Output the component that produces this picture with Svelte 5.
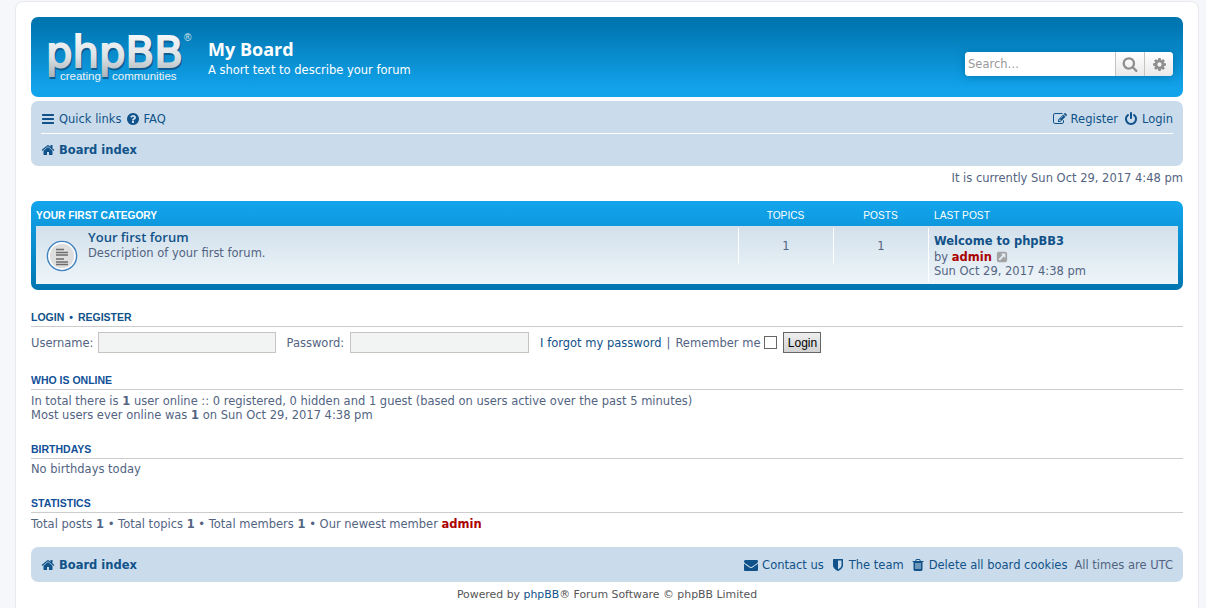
<script>
	const icons = {
		bars: "M1664 1344v128q0 26-19 45t-45 19h-1408q-26 0-45-19t-19-45v-128q0-26 19-45t45-19h1408q26 0 45 19t19 45zm0-512v128q0 26-19 45t-45 19h-1408q-26 0-45-19t-19-45v-128q0-26 19-45t45-19h1408q26 0 45 19t19 45zm0-512v128q0 26-19 45t-45 19h-1408q-26 0-45-19t-19-45v-128q0-26 19-45t45-19h1408q26 0 45 19t19 45z",
		question: "M1024 1376v-192q0-14-9-23t-23-9h-192q-14 0-23 9t-9 23v192q0 14 9 23t23 9h192q14 0 23-9t9-23zm256-672q0-88-55.5-163t-138.5-116-170-41q-243 0-371 213-15 24 8 42l132 100q7 6 19 6 16 0 25-12 53-68 86-92 34-24 86-24 48 0 85.5 26t37.5 59q0 38-20 61t-68 45q-63 28-115.5 86.5t-52.5 125.5v36q0 14 9 23t23 9h192q14 0 23-9t9-23q0-19 21.5-49.5t54.5-49.5q32-18 49-28.5t46-35 44.5-48 28-60.5 12.5-81zm384 192q0 209-103 385.5t-279.5 279.5-385.5 103-385.5-103-279.5-279.5-103-385.5 103-385.5 279.5-279.5 385.5-103 385.5 103 279.5 279.5 103 385.5z",
		home: "M1472 992v480q0 26-19 45t-45 19h-384v-384h-256v384h-384q-26 0-45-19t-19-45v-480q0-1 .5-3t.5-3l575-474 575 474q1 2 1 6zm223-69l-62 74q-8 9-21 11h-3q-13 0-21-7l-692-577-692 577q-12 8-24 7-13-2-21-11l-62-74q-8-10-7-23.5t11-21.5l719-599q32-26 76-26t76 26l244 204v-195q0-14 9-23t23-9h192q14 0 23 9t9 23v408l219 182q10 8 11 21.5t-7 23.5z",
		pencil: "M888 1184l116-116-152-152-116 116v56h96v96h56zm440-720q-16-16-33 1l-350 350q-17 17-1 33t33-1l350-350q17-17 1-33zm80 594v190q0 119-84.5 203.5t-203.5 84.5h-832q-119 0-203.5-84.5t-84.5-203.5v-832q0-119 84.5-203.5t203.5-84.5h832q63 0 117 25 15 7 18 23 3 17-9 29l-49 49q-14 14-32 8-23-6-45-6h-832q-66 0-113 47t-47 113v832q0 66 47 113t113 47h832q66 0 113-47t47-113v-126q0-13 9-22l64-64q15-15 35-7t20 29zm-96-738l288 288-672 672h-288v-288zm444 132l-92 92-288-288 92-92q28-28 68-28t68 28l152 152q28 28 28 68t-28 68z",
		power: "M1664 896q0 156-61 298t-164 245-245 164-298 61-298-61-245-164-164-245-61-298q0-182 80.5-343t226.5-270q43-32 95.5-25t83.5 50q32 42 24.5 94.5t-49.5 84.5q-98 74-151.5 181t-53.5 228q0 104 40.5 198.5t109.5 163.5 163.5 109.5 198.5 40.5 198.5-40.5 163.5-109.5 109.5-163.5 40.5-198.5q0-121-53.5-228t-151.5-181q-42-32-49.5-84.5t24.5-94.5q31-43 84-50t95 25q146 109 226.5 270t80.5 343zm-640-768v640q0 52-38 90t-90 38-90-38-38-90v-640q0-52 38-90t90-38 90 38 38 90z",
		search: "M1216 832q0-185-131.5-316.5t-316.5-131.5-316.5 131.5-131.5 316.5 131.5 316.5 316.5 131.5 316.5-131.5 131.5-316.5zm512 832q0 52-38 90t-90 38q-54 0-90-38l-343-342q-179 124-399 124-143 0-273.5-55.5t-225-150-150-225-55.5-273.5 55.5-273.5 150-225 225-150 273.5-55.5 273.5 55.5 225 150 150 225 55.5 273.5q0 220-124 399l343 343q37 37 37 90z",
		cog: "M1152 896q0-106-75-181t-181-75-181 75-75 181 75 181 181 75 181-75 75-181zm512-109v222q0 12-8 23t-20 13l-185 28q-19 54-39 91 35 50 107 138 10 12 10 25t-9 23q-27 37-99 108t-94 71q-12 0-26-9l-138-108q-44 23-91 38-16 136-29 186-7 28-36 28h-222q-14 0-24.5-8.5t-11.5-21.5l-28-184q-49-16-90-37l-141 107q-10 9-25 9-14 0-25-11-126-114-165-168-7-10-7-23 0-12 8-23 15-21 51-66.5t54-70.5q-27-50-41-99l-183-27q-13-2-21-12.5t-8-23.5v-222q0-12 8-23t19-13l186-28q14-46 39-92-40-57-107-138-10-12-10-24 0-10 9-23 26-36 98.5-107.5t94.5-71.5q13 0 26 10l138 107q44-23 91-38 16-136 29-186 7-28 36-28h222q14 0 24.5 8.5t11.5 21.5l28 184q49 16 90 37l142-107q9-9 24-9 13 0 25 10 129 119 165 170 7 8 7 22 0 12-8 23-15 21-51 66.5t-54 70.5q26 50 41 98l183 28q13 2 21 12.5t8 23.5z",
		envelope: "M1792 710v794q0 66-47 113t-113 47h-1472q-66 0-113-47t-47-113v-794q44 49 101 87 362 246 497 345 57 42 92.5 65.5t94.5 48 110 24.5h2q51 0 110-24.5t94.5-48 92.5-65.5q170-123 498-345 57-39 100-87zm0-294q0 79-49 151t-122 123q-376 261-468 325-10 7-42.5 30.5t-54 38-52 32.5-57.5 27-50 9h-2q-23 0-50-9t-57.5-27-52-32.5-54-38-42.5-30.5q-91-64-262-182.5t-205-142.5q-62-42-117-115.5t-55-136.5q0-78 41.5-130t118.5-52h1472q65 0 112.5 47t47.5 113z",
		shield: "M1344 960v-640h-448v1137q119-63 213-137 235-184 235-360zm192-768v768q0 86-33.5 170.5t-83 150-118 127.5-126.5 102.5-121 77.5-89.5 49.5-42.5 20q-12 6-26 6t-26-6q-16-7-42.5-20t-89.5-49.5-121-77.5-126.5-102.5-118-127.5-83-150-33.5-170.5v-768q0-26 19-45t45-19h1152q26 0 45 19t19 45z",
		trash: "M704 1376v-704q0-14-9-23t-23-9h-64q-14 0-23 9t-9 23v704q0 14 9 23t23 9h64q14 0 23-9t9-23zm256 0v-704q0-14-9-23t-23-9h-64q-14 0-23 9t-9 23v704q0 14 9 23t23 9h64q14 0 23-9t9-23zm256 0v-704q0-14-9-23t-23-9h-64q-14 0-23 9t-9 23v704q0 14 9 23t23 9h64q14 0 23-9t9-23zm-544-992h448l-48-117q-7-9-17-11h-317q-10 2-17 11zm928 32v64q0 14-9 23t-23 9h-96v948q0 83-47 143.5t-113 60.5h-832q-66 0-113-58.5t-47-141.5v-952h-96q-14 0-23-9t-9-23v-64q0-14 9-23t23-9h309l70-167q15-37 54-63t79-26h320q40 0 79 26t54 63l70 167h309q14 0 23 9t9 23z",
		external: "M1408 928v-480q0-26-19-45t-45-19h-480q-42 0-59 39-17 41 14 70l144 144-534 534q-19 19-19 45t19 45l102 102q19 19 45 19t45-19l534-534 144 144q18 19 45 19 12 0 25-5 39-17 39-59zm256-512v960q0 119-84.5 203.5t-203.5 84.5h-960q-119 0-203.5-84.5t-84.5-203.5v-960q0-119 84.5-203.5t203.5-84.5h960q119 0 203.5 84.5t84.5 203.5z"
	}
</script>

{#snippet icon(name, size = 14)}
	<svg class="icon" width={size} height={size} viewBox="0 0 1792 1792" aria-hidden="true"><path d={icons[name]} fill="currentColor"/></svg>
{/snippet}

<div class="wrap">
	<header class="headerbar">
		<svg class="logo" width="149" height="58" viewBox="0 0 149 58" role="img" aria-label="phpBB">
			<defs>
				<linearGradient id="silver" gradientUnits="userSpaceOnUse" x1="0" y1="3" x2="0" y2="48">
					<stop offset="0" stop-color="#f6f8f9"/>
					<stop offset="0.5" stop-color="#dde2e5"/>
					<stop offset="1" stop-color="#a4aeb4"/>
				</linearGradient>
			</defs>
			<text class="brand" x="1" y="36" textLength="137" lengthAdjust="spacingAndGlyphs" fill="#0b5d93" stroke="#0b5d93" stroke-width="2" transform="translate(1 1.5)">phpBB</text>
			<text class="brand" x="1" y="36" textLength="137" lengthAdjust="spacingAndGlyphs" fill="url(#silver)" stroke="url(#silver)" stroke-width="2">phpBB</text>
			<text class="tag" x="15" y="48.5">creating</text>
			<text class="tag" x="67" y="48.5">communities</text>
			<text class="reg" x="139" y="10">®</text>
		</svg>
		<div class="site">
			<h1>My Board</h1>
			<p>A short text to describe your forum</p>
		</div>
		<div class="searchbox">
			<input type="text" placeholder="Search…"/>
			<button type="button">{@render icon("search", 16)}</button>
			<button type="button">{@render icon("cog", 15)}</button>
		</div>
	</header>

	<nav class="navbar">
		<div class="navrow">
			<div class="links quick">
				<a href="#q">{@render icon("bars")}Quick links</a>
				<a href="#f">{@render icon("question")}FAQ</a>
			</div>
			<div class="links">
				<a href="#r">{@render icon("pencil")}Register</a>
				<a href="#l">{@render icon("power")}Login</a>
			</div>
		</div>
		<div class="crumbs"><a href="#i">{@render icon("home")}<b>Board index</b></a></div>
	</nav>

	<p class="time">It is currently Sun Oct 29, 2017 4:48 pm</p>

	<section class="forabg">
		<div class="cols head">
			<div class="main">Your first category</div>
			<div class="num">Topics</div>
			<div class="num">Posts</div>
			<div class="last">Last post</div>
		</div>
		<div class="cols row">
			<div class="main forum">
				<svg class="forumicon" width="32" height="32" viewBox="0 0 32 32" aria-hidden="true">
					<circle cx="16" cy="16" r="14.6" fill="#fff" stroke="#3f82bf" stroke-width="1.4"/>
					<circle cx="16" cy="16" r="12.2" fill="#dedede"/>
					<path d="M10 9.5h8M10 12.5h12M10 15h12M10 19h8M10 22h12M10 24.5h12" stroke="#6d6d6d" stroke-width="1.5" fill="none"/>
				</svg>
				<div>
					<a class="forumtitle" href="#t">Your first forum</a>
					<p>Description of your first forum.</p>
				</div>
			</div>
			<div class="num cell">1</div>
			<div class="num cell">1</div>
			<div class="last cell">
				<a class="lasttitle" href="#w">Welcome to phpBB3</a>
				<span class="line">by <a class="admin" href="#a">admin</a> <span class="ext">{@render icon("external", 12)}</span></span>
				<span class="line">Sun Oct 29, 2017 4:38 pm</span>
			</div>
		</div>
	</section>

	<section class="login">
		<h3><a href="#l">Login</a><span class="dot">•</span><a href="#r">Register</a></h3>
		<form class="loginform">
			<label for="u">Username:</label>
			<input id="u" class="field" type="text"/>
			<label class="pw" for="p">Password:</label>
			<input id="p" class="field second" type="password"/>
			<span class="remember"><a href="#p">I forgot my password</a><span class="sep">|</span>Remember me</span>
			<input class="check" type="checkbox"/>
			<button class="submit" type="button">Login</button>
		</form>
	</section>

	<section class="online">
		<h3>Who is online</h3>
		<p>In total there is <b>1</b> user online :: 0 registered, 0 hidden and 1 guest (based on users active over the past 5 minutes)<br/>Most users ever online was <b>1</b> on Sun Oct 29, 2017 4:38 pm</p>
	</section>

	<section class="birthdays">
		<h3>Birthdays</h3>
		<p>No birthdays today</p>
	</section>

	<section class="stats">
		<h3>Statistics</h3>
		<p>Total posts <b>1</b> • Total topics <b>1</b> • Total members <b>1</b> • Our newest member <a class="admin" href="#a">admin</a></p>
	</section>

	<nav class="navbar footbar">
		<a href="#i">{@render icon("home")}<b>Board index</b></a>
		<div class="links foot">
			<a href="#c">{@render icon("envelope")}Contact us</a>
			<a href="#t">{@render icon("shield")}The team</a>
			<a href="#d">{@render icon("trash")}Delete all board cookies</a>
			<span>All times are UTC</span>
		</div>
	</nav>

	<p class="copy">Powered by <a href="#b">phpBB</a>® Forum Software © phpBB Limited</p>
</div>

<style>
	:global(html), :global(body) {
		height: 608px;
		overflow: hidden;
	}
	:global(body) {
		margin: 0;
		padding-top: 1px;
		box-sizing: border-box;
		background: #f5f7fa;
		font-family: "DejaVu Sans", Verdana, sans-serif;
		font-size: 11.5px;
		color: #536482;
	}
	* {
		box-sizing: border-box;
	}
	a {
		color: #105289;
		text-decoration: none;
	}
	p, h1, h3 {
		margin: 0;
	}
	.wrap {
		width: 1184px;
		margin-left: 15px;
		padding: 15px;
		background: #fff;
		border: 1px solid #e6e9ed;
		border-radius: 8px;
	}
	.icon {
		flex: none;
	}
	.headerbar {
		height: 80px;
		display: flex;
		padding: 14px 10px 0 14px;
		color: #fff;
		background: linear-gradient(#0076b1 10%, #12a3eb 90%);
		border-radius: 7px;
	}
	.logo {
		margin-right: 14px;
		overflow: visible;
	}
	.brand {
		font-family: "DejaVu Sans", sans-serif;
		font-size: 43px;
	}
	.tag {
		font-family: "Liberation Sans", Arial, sans-serif;
		font-size: 11.5px;
		fill: #eef3f6;
	}
	.reg {
		font-family: "Liberation Sans", Arial, sans-serif;
		font-size: 10px;
		fill: #dfe6ea;
	}
	.site {
		padding-top: 5px;
	}
	h1 {
		font-family: "Open Sans", "DejaVu Sans", sans-serif;
		font-size: 18px;
		line-height: 26px;
		font-weight: 700;
	}
	.site p {
		margin-top: 1px;
		line-height: 14px;
	}
	.searchbox {
		margin-left: auto;
		margin-top: 21px;
		height: 24px;
		display: flex;
		border-radius: 4px;
		overflow: hidden;
		background: #fff;
		box-shadow: 0 0 10px #0075b0;
	}
	.searchbox input {
		width: 150px;
		border: 0;
		outline: 0;
		padding: 0 3px;
		font: 11.5px "DejaVu Sans", Verdana, sans-serif;
		color: #333;
		background: #fff;
	}
	.searchbox input::placeholder {
		color: #999;
		opacity: 1;
	}
	.searchbox button {
		width: 29px;
		display: flex;
		align-items: center;
		justify-content: center;
		padding: 0;
		color: #8f8f8f;
		border: 0;
		border-left: 1px solid #c7c3bf;
		background: linear-gradient(#fff, #e9e9e9);
	}
	.navbar {
		margin-top: 4px;
		padding: 3px 10px;
		background: #cadceb;
		border-radius: 7px;
	}
	.navrow {
		height: 30px;
		display: flex;
		justify-content: space-between;
		align-items: center;
		border-bottom: 1px solid #fff;
	}
	.links {
		display: flex;
		align-items: center;
		gap: 6px;
	}
	.links.quick {
		gap: 4px;
	}
	.links.foot {
		gap: 7px;
	}
	.links a, .crumbs a, .footbar > a {
		display: flex;
		align-items: center;
		gap: 4px;
	}
	.crumbs {
		height: 29px;
		padding-top: 3px;
		display: flex;
		align-items: center;
	}
	.crumbs b, .footbar b {
		font-weight: 700;
	}
	.time {
		margin-top: 6px;
		line-height: 13px;
		text-align: right;
	}
	.forabg {
		margin-top: 16px;
		padding: 5px 5px 6px;
		background: linear-gradient(#12a3eb 5%, #0076b1 100%);
		border-radius: 7px;
	}
	.cols {
		display: grid;
		grid-template-columns: 1fr 95px 95px 250px;
	}
	.head {
		height: 19px;
		align-items: center;
		font-family: "Liberation Sans", Arial, sans-serif;
		font-size: 10.2px;
		color: #fff;
		text-transform: uppercase;
	}
	.head .main {
		font-weight: 700;
	}
	.head .last {
		padding-left: 6px;
	}
	.num {
		text-align: center;
	}
	.row {
		height: 58px;
		margin-top: 1px;
		padding-top: 2px;
		background: linear-gradient(#d2e0eb, #eef5f9);
	}
	.forum {
		display: flex;
		gap: 10px;
		padding-left: 10px;
	}
	.forumicon {
		margin-top: 12px;
	}
	.forumtitle {
		display: block;
		font-family: "Open Sans", "DejaVu Sans", sans-serif;
		font-size: 13px;
		font-weight: 600;
		line-height: 17px;
		margin-top: 1px;
	}
	.forum p {
		line-height: 14px;
	}
	.cell {
		border-left: 1px solid #fff;
	}
	.num.cell {
		height: 36px;
		line-height: 36px;
	}
	.last.cell {
		display: flex;
		flex-direction: column;
		height: 54px;
		padding: 6px 0 0 5px;
		line-height: 15px;
	}
	.lasttitle {
		font-weight: 700;
	}
	.line {
		display: block;
		height: 15px;
	}
	.admin {
		color: #aa0000;
		font-weight: 700;
	}
	.ext {
		color: #a3a3a3;
		position: relative;
		top: 2px;
	}
	h3 {
		height: 16px;
		font-family: "Liberation Sans", Arial, sans-serif;
		font-size: 10.5px;
		line-height: 13px;
		font-weight: 700;
		text-transform: uppercase;
		color: #115098;
		border-bottom: 1px solid #ccc;
	}
	.dot {
		margin: 0 5px;
	}
	section p {
		line-height: 14px;
	}
	.login {
		margin-top: 21px;
	}
	.loginform {
		height: 21px;
		margin-top: 5px;
		display: flex;
		align-items: center;
	}
	.field {
		width: 178px;
		height: 21px;
		margin-left: 4px;
		background: #f2f3f3;
		border: 1px solid #c7c3bf;
	}
	.second {
		width: 179px;
		margin-left: 6px;
	}
	.pw, .remember {
		margin-left: 11px;
	}
	.sep {
		margin: 0 5px;
	}
	.check {
		width: 13px;
		height: 13px;
		margin: 0 0 0 4px;
		appearance: none;
		background: #fff;
		border: 1px solid #666;
	}
	.submit {
		width: 38px;
		height: 21px;
		margin-left: 6px;
		padding: 0;
		font: 12px "Liberation Sans", Arial, sans-serif;
		color: #000;
		background: linear-gradient(#efefef, #d2d2d2);
		border: 1px solid #666;
	}
	.online, .birthdays {
		margin-top: 21px;
	}
	.online p, .stats p {
		margin-top: 4px;
	}
	.birthdays p {
		margin-top: 3px;
	}
	.stats {
		margin-top: 21px;
	}
	.footbar {
		height: 35px;
		margin-top: 16px;
		display: flex;
		justify-content: space-between;
		align-items: center;
	}
	.copy {
		margin-top: 6px;
		font-size: 10.9px;
		line-height: 13px;
		text-align: center;
		color: #555;
	}
</style>
